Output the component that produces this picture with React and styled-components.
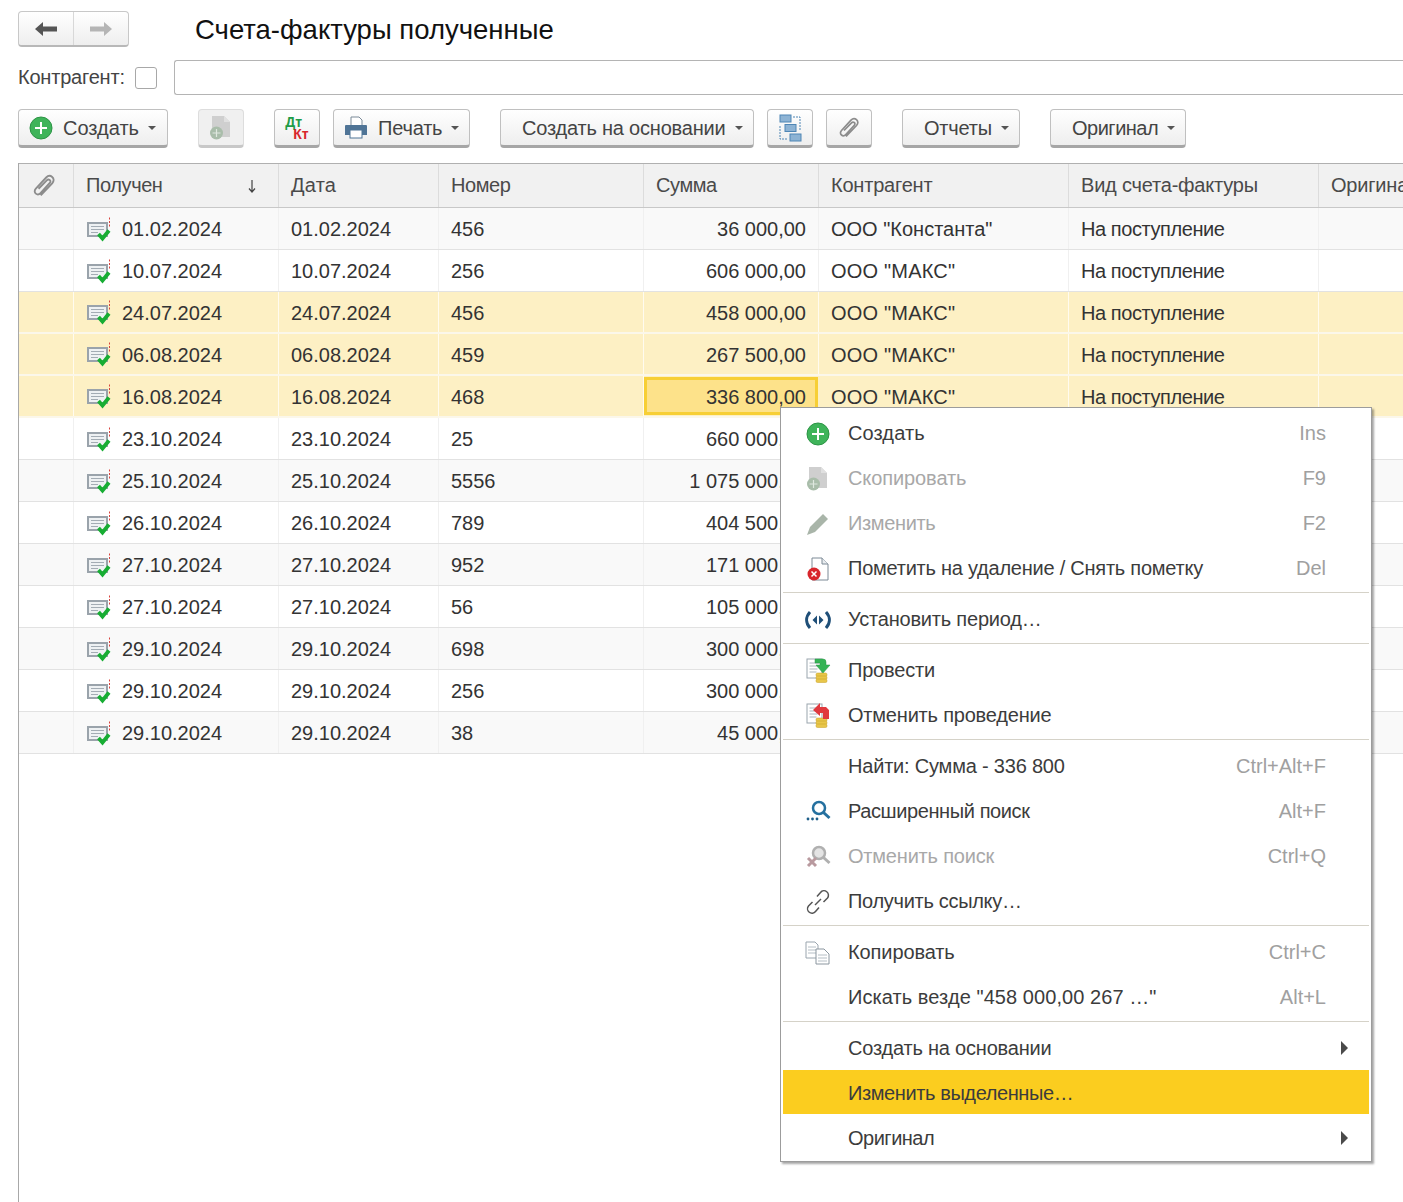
import React from 'react';
import styled, { createGlobalStyle } from 'styled-components';

const Global = createGlobalStyle`
    html, body { margin: 0; padding: 0; background: #fff; }
    body { font-family: "Liberation Sans", Arial, sans-serif; color: #333; }
`

const rows = [
    ['01.02.2024', '456', '36 000,00', 'ООО "Константа"'],
    ['10.07.2024', '256', '606 000,00', 'ООО "МАКС"'],
    ['24.07.2024', '456', '458 000,00', 'ООО "МАКС"'],
    ['06.08.2024', '459', '267 500,00', 'ООО "МАКС"'],
    ['16.08.2024', '468', '336 800,00', 'ООО "МАКС"'],
    ['23.10.2024', '25', '660 000,00', 'ООО "МАКС"'],
    ['25.10.2024', '5556', '1 075 000,00', 'ООО "МАКС"'],
    ['26.10.2024', '789', '404 500,00', 'ООО "МАКС"'],
    ['27.10.2024', '952', '171 000,00', 'ООО "МАКС"'],
    ['27.10.2024', '56', '105 000,00', 'ООО "МАКС"'],
    ['29.10.2024', '698', '300 000,00', 'ООО "МАКС"'],
    ['29.10.2024', '256', '300 000,00', 'ООО "МАКС"'],
    ['29.10.2024', '38', '45 000,00', 'ООО "МАКС"'],
]

const PlusIcon = () => (
    <svg width="24" height="24" viewBox="0 0 24 24">
        <circle cx="12" cy="12" r="11" fill="#3fb45a" stroke="#2c9445" />
        <path d="M12 6v12M6 12h12" stroke="#fff" strokeWidth="2" />
    </svg>
)

const CopyIcon = () => (
    <svg width="26" height="26" viewBox="0 0 26 26">
        <path d="M4 1h12l6 6v15H4z" fill="#cfcfcf" />
        <path d="M16 1v6h6z" fill="#e0e0e0" />
        <circle cx="8.500" cy="18" r="6.500" fill="#a9bdaa" />
        <path d="M8.500 14v8M4.500 18h8" stroke="#dfe8df" strokeWidth="1.200" />
    </svg>
)

const PencilIcon = () => (
    <svg width="24" height="24" viewBox="0 0 24 24">
        <path d="M1 23l3-8L17 2l5 5L9 20z" fill="#a9b5a9" />
    </svg>
)

const DeleteIcon = () => (
    <svg width="24" height="24" viewBox="0 0 24 24">
        <path d="M6 1h10l6 6v16H6z" fill="#fff" stroke="#7d8a96" />
        <path d="M16 1v6h6" fill="#e8ecef" stroke="#7d8a96" />
        <circle cx="8" cy="17" r="6.500" fill="#d8262c" />
        <path d="M5.500 14.500l5 5M10.500 14.500l-5 5" stroke="#fff" strokeWidth="1.500" />
    </svg>
)

const PeriodIcon = () => (
    <svg width="26" height="24" viewBox="0 0 26 24">
        <path d="M5 4c-4.500 5-4.500 11 0 16M21 4c4.500 5 4.500 11 0 16" fill="none" stroke="#1f4f78" strokeWidth="3" />
        <path d="M12 7.500v9L7.500 12zM14 7.500v9l4.500-4.500z" fill="#1f4f78" />
    </svg>
)

const Coins = () => (
    <>
        <rect x="11" y="15" width="11" height="3.500" rx="1.500" fill="#e8c64a" stroke="#c79f22" strokeWidth=".5" />
        <rect x="11" y="18" width="11" height="3.500" rx="1.500" fill="#e8c64a" stroke="#c79f22" strokeWidth=".5" />
        <rect x="11" y="21" width="11" height="3.500" rx="1.500" fill="#e8c64a" stroke="#c79f22" strokeWidth=".5" />
    </>
)

const PostIcon = () => (
    <svg width="26" height="26" viewBox="0 0 26 26">
        <rect x="2" y="1" width="15" height="19" fill="#fff" stroke="#9aa5ae" />
        <path d="M4.500 5h10M4.500 8h10M4.500 11h8M4.500 14h7" stroke="#a9b4bc" />
        <Coins />
        <path d="M10 1h8a3 3 0 0 1 3 3v3h4l-7 8-7-8h4V5h-5z" fill="#35b455" stroke="#2a9444" strokeWidth=".5" />
    </svg>
)

const UnpostIcon = () => (
    <svg width="26" height="26" viewBox="0 0 26 26">
        <rect x="2" y="1" width="15" height="19" fill="#fff" stroke="#9aa5ae" />
        <path d="M4.500 5h10M4.500 8h10M4.500 11h8M4.500 14h7" stroke="#a9b4bc" />
        <Coins />
        <path d="M15 0l-7 7 7 6v-3h3v6h6V7l-3-3h-6z" fill="#e0393e" />
    </svg>
)

const SearchIcon = () => (
    <svg width="26" height="24" viewBox="0 0 26 24">
        <circle cx="14" cy="8" r="6" fill="none" stroke="#25709f" strokeWidth="2.500" />
        <path d="M18.500 12.500l6 5.500" stroke="#25709f" strokeWidth="3" />
        <circle cx="3" cy="19" r="1.400" fill="#1f5f8a" />
        <circle cx="7.500" cy="19" r="1.400" fill="#1f5f8a" />
        <circle cx="12" cy="19" r="1.400" fill="#1f5f8a" />
    </svg>
)

const CancelSearchIcon = () => (
    <svg width="26" height="24" viewBox="0 0 26 24">
        <circle cx="14" cy="8" r="6" fill="#e4e4e4" stroke="#b0b0b0" strokeWidth="2.500" />
        <path d="M18.500 12.500l6 5.500" stroke="#b0b0b0" strokeWidth="3" />
        <path d="M3 13l8 8M11 13l-8 8" stroke="#b99a9f" strokeWidth="3" />
    </svg>
)

const LinkIcon = () => (
    <svg width="26" height="26" viewBox="0 0 26 26" fill="none" stroke="#555" strokeWidth="1.500">
        <path d="M10 16l6-6" />
        <path d="M12 7.500l3.500-4a4.300 4.300 0 0 1 7 5.500L18.500 13" />
        <path d="M14 18.500l-3.500 4a4.300 4.300 0 0 1-7-5.500L7.500 13" />
    </svg>
)

const ClipboardIcon = () => (
    <svg width="26" height="24" viewBox="0 0 26 24">
        <path d="M1 1h9l3 3v13H1z" fill="#fff" stroke="#9aa5ae" />
        <path d="M3 6h8M3 9h8M3 12h8" stroke="#b5bec5" />
        <path d="M11 8h8l5 5v10H11z" fill="#fff" stroke="#8b969f" />
        <path d="M13 14h9M13 17h9M13 20h9" stroke="#b5bec5" />
    </svg>
)

const DocCheckIcon = () => (
    <svg width="26" height="26" viewBox="0 1.500 26 26">
        <rect x="2" y="7.500" width="19" height="13" fill="#eef1f3" stroke="#9aa3ab" strokeWidth="2" />
        <path d="M5 11h13M5 14h13M5 17h7" stroke="#a3acb4" strokeWidth="1.200" />
        <path d="M23.500 2v2M23.500 5.500v2M23.500 9v2" stroke="#d8423c" strokeWidth="1" />
        <path d="M12.500 18.500l4 4.500 6.500-8" fill="none" stroke="#17ad33" strokeWidth="3.800" />
    </svg>
)

const PrintIcon = () => (
    <svg width="24" height="24" viewBox="0 0 24 24">
        <path d="M7 1h8l3 3v6H7z" fill="#fff" stroke="#7b8a98" />
        <path d="M2 9h20a1 1 0 0 1 1 1v9H1v-9a1 1 0 0 1 1-1z" fill="#4f7496" />
        <rect x="6" y="14" width="12" height="8" fill="#fff" stroke="#4f7496" />
    </svg>
)

const StructureIcon = () => (
    <svg width="24" height="28" viewBox="0 0 24 28">
        <rect x="2" y="1" width="11" height="7" fill="#8db3d4" stroke="#4f86b5" />
        <rect x="7" y="10.500" width="11" height="7" fill="#8db3d4" stroke="#4f86b5" />
        <rect x="12" y="20" width="11" height="7" fill="#8db3d4" stroke="#4f86b5" />
        <path d="M2 12v13h8M15 3h7v14" fill="none" stroke="#4f86b5" strokeDasharray="2 1" />
    </svg>
)

const ClipIcon = ({ size = 22 }) => (
    <svg width={size} height={size} viewBox="0 0 22 22" fill="none" stroke="#8c8c8c" strokeWidth="1.700">
        <path d="M8 19.500L18.500 8.500c2-2.300 1.500-4.500 0-5.800s-3.700-1.400-5.500.5L3.500 13.500c-1.500 1.700-1.200 3.500 0 4.500s3 .9 4.300-.5l8.500-9.300c.9-1 .8-2-.1-2.700s-1.900-.5-2.700.4L6 13.500" />
    </svg>
)

const ArrowIcon = ({ left, color }) => (
    <svg width="24" height="16" viewBox="0 0 24 16" style={{ transform: left ? 'none' : 'scaleX(-1)' }}>
        <path d="M1 8l8-7v4.500h14v5H9V15z" fill={color} />
    </svg>
)

const SortIcon = () => (
    <svg width="10" height="14" viewBox="0 0 10 14" fill="none" stroke="#444" strokeWidth="1.200">
        <path d="M5 1v12M2 9.500L5 13l3-3.500" />
    </svg>
)

const Page = styled.div`
    position: relative;
    width: 1403px;
    height: 1202px;
    overflow: hidden;
    box-sizing: border-box;
    padding: 11px 0 0 18px;
    display: flex;
    flex-direction: column;
`

const Header = styled.div`
    display: flex;
    align-items: center;
    height: 36px;
`

const NavGroup = styled.div`
    display: flex;
    width: 111px;
    height: 36px;
    box-sizing: border-box;
    border: 1px solid #c8c8c8;
    border-bottom: 2px solid #b8b8b8;
    border-radius: 4px;
    background: linear-gradient(#ffffff, #eeeeee);
`

const NavButton = styled.div`
    flex: 1;
    display: flex;
    align-items: center;
    justify-content: center;
    & + & { border-left: 1px solid #d8d8d8; }
`

const Title = styled.h1`
    margin: 2px 0 0 66px;
    font-size: 27.5px;
    font-weight: 400;
    color: #111;
    white-space: nowrap;
`

const FilterRow = styled.div`
    display: flex;
    align-items: center;
    margin-top: 13px;
    height: 35px;
`

const FilterLabel = styled.span`
    font-size: 20px;
    letter-spacing: -0.2px;
    color: #444;
    width: 117px;
`

const CheckBox = styled.div`
    width: 22px;
    height: 22px;
    box-sizing: border-box;
    border: 1px solid #a8a8a8;
    border-radius: 3px;
    background: #fff;
`

const FilterInput = styled.div`
    flex: 1;
    height: 35px;
    box-sizing: border-box;
    margin-left: 17px;
    border: 1px solid #b4b4b4;
    border-right: none;
    border-radius: 3px 0 0 3px;
`

const Toolbar = styled.div`
    display: flex;
    gap: 30px;
    margin-top: 14px;
`

const ToolGroup = styled.div`
    display: flex;
    gap: 13px;
`

const ToolButton = styled.div`
    width: ${p => p.$w}px;
    height: 39px;
    box-sizing: border-box;
    display: flex;
    align-items: center;
    justify-content: ${p => p.$icon ? 'center' : 'flex-start'};
    padding: ${p => p.$icon ? '0' : `1px 0 0 ${p.$pad || 21}px`};
    gap: ${p => p.$gap || 10}px;
    border: 1px solid ${p => p.$off ? '#dddddd' : '#c0c0c0'};
    border-bottom: 3px solid ${p => p.$off ? '#c8c8c8' : '#a6a6a6'};
    border-radius: 4px;
    background: ${p => p.$off ? '#f0f0f0' : 'linear-gradient(#ffffff, #eeeeee)'};
    font-size: 20px;
    letter-spacing: ${p => p.$ls ?? -0.2}px;
    color: #444;
    white-space: nowrap;
`

const Caret = styled.span`
    width: 0;
    height: 0;
    margin-left: -1px;
    border-left: 4px solid transparent;
    border-right: 4px solid transparent;
    border-top: 4px solid #555;
`

const DtKt = styled.div`
    display: flex;
    flex-direction: column;
    font-size: 14px;
    font-weight: 700;
    line-height: 12px;
    letter-spacing: 0;
`

const Dt = styled.span`
    color: #1f9c48;
`

const Kt = styled.span`
    color: #d8262c;
    margin-left: 8px;
`

const Table = styled.div`
    flex: 1;
    margin-top: 15px;
    border-left: 1px solid #a8a8a8;
`

const grid = `
    display: grid;
    grid-template-columns: 55px 205px 160px 205px 175px 250px 250px 85px;
`

const HeadRow = styled.div`
    ${grid}
    width: 1385px;
    height: 45px;
    box-sizing: border-box;
    border-top: 1px solid #b0b0b0;
    border-bottom: 1px solid #c8c8c8;
    background: #f1f1f1;
`

const HeadCell = styled.div`
    display: flex;
    align-items: center;
    justify-content: ${p => p.$center ? 'center' : 'space-between'};
    padding: ${p => p.$center ? '0 5px 0 0' : '0 21px 0 12px'};
    border-right: 1px solid #dcdcdc;
    font-size: 20px;
    letter-spacing: ${p => p.$ls ?? -0.2}px;
    color: #4a4a4a;
    white-space: nowrap;
    overflow: hidden;
`

const Row = styled.div`
    ${grid}
    height: 42px;
    box-sizing: border-box;
    border-bottom: ${p => p.$sel ? '2px solid #fbf7ea' : '1px solid #e2e2e2'};
    background: ${p => p.$sel ? '#fdf0c4' : p.$alt ? '#f9f9f9' : '#fff'};
    font-size: 20px;
    color: #333;
`

const Cell = styled.div`
    display: flex;
    align-items: center;
    justify-content: ${p => p.$right ? 'flex-end' : 'flex-start'};
    gap: 10px;
    box-sizing: border-box;
    padding: ${p => p.$right ? '2px 12px 0 0' : '2px 0 0 12px'};
    border-right: 1px solid ${p => p.$sel ? '#fffbef' : '#f0f0f0'};
    letter-spacing: ${p => p.$ls || 0}px;
    white-space: nowrap;
`

const CurrentCell = styled(Cell)`
    margin: 1px 1px 0 0;
    height: 38px;
    padding: 2px 9px 0 0;
    border: 3px solid #f7cf35;
    background: #fde28a;
`

const Menu = styled.div`
    position: absolute;
    left: 780px;
    top: 407px;
    width: 592px;
    height: 755px;
    box-sizing: border-box;
    padding: 3px 2px;
    background: #fff;
    border: 1px solid #9c9c9c;
    box-shadow: 2px 2px 2px rgba(0, 0, 0, .35);
    font-size: 20px;
`

const MenuItem = styled.div`
    display: grid;
    grid-template-columns: 65px 1fr auto 43px;
    align-items: center;
    box-sizing: border-box;
    height: ${p => p.$active ? 44 : 45}px;
    margin: ${p => p.$active ? '-1px 0 2px' : '0'};
    padding-top: ${p => p.$active ? 2 : 0}px;
    background: ${p => p.$active ? '#fbcd1f' : 'transparent'};
    color: ${p => p.$off ? '#a8a8a8' : '#3c3c3c'};
`

const MenuText = styled.span`
    letter-spacing: ${p => p.$ls ?? -0.2}px;
`

const MenuIcon = styled.div`
    display: flex;
    justify-content: center;
    padding-left: 5px;
`

const Shortcut = styled.span`
    color: #a0a0a0;
`

const SubArrow = styled.span`
    justify-self: end;
    margin: 0 21px 2px 0;
    width: 0;
    height: 0;
    border-top: 7px solid transparent;
    border-bottom: 7px solid transparent;
    border-left: 7px solid #4a4a4a;
`

const Divider = styled.div`
    height: 1px;
    margin: 1px 0 4px;
    background: #d5d2c8;
`

const menuGroups = [
    [
        { icon: <PlusIcon />, text: 'Создать', key: 'Ins', ls: 0.1 },
        { icon: <CopyIcon />, text: 'Скопировать', key: 'F9', off: true, ls: -0.1 },
        { icon: <PencilIcon />, text: 'Изменить', key: 'F2', off: true, ls: -0.35 },
        { icon: <DeleteIcon />, text: 'Пометить на удаление / Снять пометку', key: 'Del', ls: -0.24 },
    ],
    [{ icon: <PeriodIcon />, text: 'Установить период…' }],
    [
        { icon: <PostIcon />, text: 'Провести' },
        { icon: <UnpostIcon />, text: 'Отменить проведение' },
    ],
    [
        { text: 'Найти: Сумма - 336 800', key: 'Ctrl+Alt+F' },
        { icon: <SearchIcon />, text: 'Расширенный поиск', key: 'Alt+F', ls: -0.4 },
        { icon: <CancelSearchIcon />, text: 'Отменить поиск', key: 'Ctrl+Q', off: true },
        { icon: <LinkIcon />, text: 'Получить ссылку…', ls: -0.3 },
    ],
    [
        { icon: <ClipboardIcon />, text: 'Копировать', key: 'Ctrl+C', ls: -0.1 },
        { text: 'Искать везде "458 000,00 267 …"', key: 'Alt+L', ls: 0.07 },
    ],
    [
        { text: 'Создать на основании', sub: true },
        { text: 'Изменить выделенные…', active: true, ls: -0.4 },
        { text: 'Оригинал', sub: true, ls: -0.5 },
    ],
]

export default function App() {
    return (
        <Page>
            <Global />
            <Header>
                <NavGroup>
                    <NavButton><ArrowIcon left color="#555" /></NavButton>
                    <NavButton><ArrowIcon color="#b5b5b5" /></NavButton>
                </NavGroup>
                <Title>Счета-фактуры полученные</Title>
            </Header>
            <FilterRow>
                <FilterLabel>Контрагент:</FilterLabel>
                <CheckBox />
                <FilterInput />
            </FilterRow>
            <Toolbar>
                <ToolGroup>
                    <ToolButton $w={150} $pad={10} $gap={10} $ls={0}><PlusIcon />Создать<Caret /></ToolButton>
                </ToolGroup>
                <ToolGroup>
                    <ToolButton $w={46} $icon $off><CopyIcon /></ToolButton>
                </ToolGroup>
                <ToolGroup>
                    <ToolButton $w={46} $icon><DtKt><Dt>Дт</Dt><Kt>Кт</Kt></DtKt></ToolButton>
                    <ToolButton $w={137} $pad={10}><PrintIcon />Печать<Caret /></ToolButton>
                </ToolGroup>
                <ToolGroup>
                    <ToolButton $w={254}>Создать на основании<Caret /></ToolButton>
                    <ToolButton $w={46} $icon><StructureIcon /></ToolButton>
                    <ToolButton $w={46} $icon><ClipIcon /></ToolButton>
                </ToolGroup>
                <ToolGroup>
                    <ToolButton $w={118}>Отчеты<Caret /></ToolButton>
                </ToolGroup>
                <ToolGroup>
                    <ToolButton $w={136} $ls={-0.5}>Оригинал<Caret /></ToolButton>
                </ToolGroup>
            </Toolbar>
            <Table>
                <HeadRow>
                    <HeadCell $center><ClipIcon size={24} /></HeadCell>
                    <HeadCell $ls={-0.4}>Получен<SortIcon /></HeadCell>
                    <HeadCell $ls={0.2}>Дата</HeadCell>
                    <HeadCell $ls={-0.4}>Номер</HeadCell>
                    <HeadCell $ls={-0.4}>Сумма</HeadCell>
                    <HeadCell>Контрагент</HeadCell>
                    <HeadCell>Вид счета-фактуры</HeadCell>
                    <HeadCell>Оригинал</HeadCell>
                </HeadRow>
                {rows.map((r, i) => {
                    const sel = i >= 2 && i <= 4
                    const alt = i % 2 === 0
                    return (
                        <Row key={i} $sel={sel} $alt={alt}>
                            <Cell $sel={sel} />
                            <Cell $sel={sel}><DocCheckIcon />{r[0]}</Cell>
                            <Cell $sel={sel}>{r[0]}</Cell>
                            <Cell $sel={sel}>{r[1]}</Cell>
                            {i === 4
                                ? <CurrentCell $right>{r[2]}</CurrentCell>
                                : <Cell $sel={sel} $right>{r[2]}</Cell>}
                            <Cell $sel={sel} $ls={i === 0 ? 0 : 0.2}>{r[3]}</Cell>
                            <Cell $sel={sel} $ls={-0.42}>На поступление</Cell>
                            <Cell $sel={sel} />
                        </Row>
                    )
                })}
            </Table>
            <Menu>
                {menuGroups.map((group, g) => (
                    <React.Fragment key={g}>
                        {g > 0 && <Divider />}
                        {group.map(item => (
                            <MenuItem key={item.text} $off={item.off} $active={item.active}>
                                <MenuIcon>{item.icon}</MenuIcon>
                                <MenuText $ls={item.ls}>{item.text}</MenuText>
                                <Shortcut>{item.key}</Shortcut>
                                {item.sub ? <SubArrow /> : <span />}
                            </MenuItem>
                        ))}
                    </React.Fragment>
                ))}
            </Menu>
        </Page>
    )
}
